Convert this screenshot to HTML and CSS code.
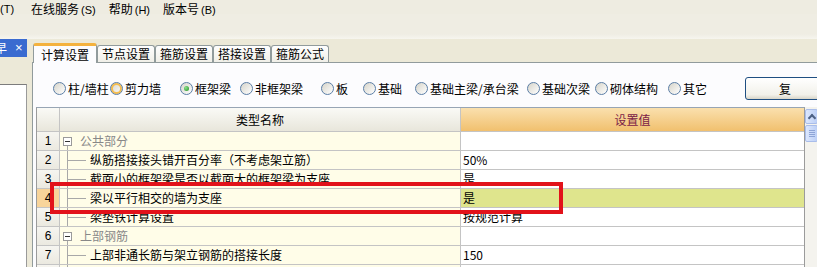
FILE: index.html
```html
<!DOCTYPE html>
<html lang="zh-CN">
<head>
<meta charset="UTF-8">
<title>计算设置</title>
<link rel="stylesheet" href="styles.css">
</head>
<body>

<div class="menubar">
  <span class="menu-item">(T)</span>
  <span class="menu-item first">在线服务<small>(S)</small></span>
  <span class="menu-item">帮助<small>(H)</small></span>
  <span class="menu-item">版本号<small>(B)</small></span>
</div>
<div class="toolbar"></div>

<div class="main">
  <div class="side">
    <div class="side-title"><span>早</span><span class="close">×</span></div>
    <div class="side-gap"></div>
    <div class="side-body"></div>
  </div>
  <div class="splitter"></div>

  <div class="tabpane">
    <div class="tabs">
      <div class="tab active">计算设置</div>
      <div class="tab">节点设置</div>
      <div class="tab">箍筋设置</div>
      <div class="tab">搭接设置</div>
      <div class="tab">箍筋公式</div>
    </div>

    <div class="panel">
      <div class="toprow">
        <div class="radios">
          <label class="radio"><span class="dot"></span>柱/墙柱</label>
          <label class="radio"><span class="dot hover"></span>剪力墙</label>
          <label class="radio"><span class="dot checked"></span>框架梁</label>
          <label class="radio"><span class="dot"></span>非框架梁</label>
          <label class="radio"><span class="dot"></span>板</label>
          <label class="radio"><span class="dot"></span>基础</label>
          <label class="radio"><span class="dot"></span>基础主梁/承台梁</label>
          <label class="radio"><span class="dot"></span>基础次梁</label>
          <label class="radio"><span class="dot"></span>砌体结构</label>
          <label class="radio"><span class="dot"></span>其它</label>
        </div>
        <button class="btn">复</button>
      </div>

      <div class="gridwrap">
        <div class="grid">
          <div class="row head">
            <div class="num"></div>
            <div class="name">类型名称</div>
            <div class="val">设置值</div>
          </div>
          <div class="row">
            <div class="num">1</div>
            <div class="name group"><span class="box"></span>公共部分</div>
            <div class="val"></div>
          </div>
          <div class="row">
            <div class="num">2</div>
            <div class="name child">纵筋搭接接头错开百分率（不考虑架立筋）</div>
            <div class="val">50%</div>
          </div>
          <div class="row">
            <div class="num">3</div>
            <div class="name child">截面小的框架梁是否以截面大的框架梁为支座</div>
            <div class="val">是</div>
          </div>
          <div class="row current">
            <div class="num">4</div>
            <div class="name child">梁以平行相交的墙为支座</div>
            <div class="val">是</div>
          </div>
          <div class="row">
            <div class="num">5</div>
            <div class="name child">梁垫铁计算设置</div>
            <div class="val">按规范计算</div>
          </div>
          <div class="row">
            <div class="num">6</div>
            <div class="name group"><span class="box"></span>上部钢筋</div>
            <div class="val"></div>
          </div>
          <div class="row">
            <div class="num">7</div>
            <div class="name child">上部非通长筋与架立钢筋的搭接长度</div>
            <div class="val">150</div>
          </div>
          <div class="row">
            <div class="num"></div>
            <div class="name child"></div>
            <div class="val"></div>
          </div>
        </div>
        <div class="scrollbar">
          <div class="sb-up"></div>
          <div class="sb-thumb"></div>
        </div>
      </div>
    </div>
  </div>
</div>

<div class="mark"></div>

</body>
</html>
```

FILE: styles.css
```css
html, body {
  margin: 0;
  padding: 0;
}

body {
  width: 817px;
  height: 267px;
  overflow: hidden;
  font-family: "Noto Sans CJK SC", "Liberation Sans", sans-serif;
  font-size: 12px;
  color: #000;
  background-color: #eeece1;
}

/* menu + toolbar */
.menubar {
  height: 13px;
  padding-top: 1px;
  line-height: 16px;
  display: flex;
  gap: 13px;
  white-space: nowrap;
}

.menu-item {
  height: 16px;
}

.menu-item small {
  font-family: "Liberation Sans", sans-serif;
  font-size: 11px;
  margin-left: 2px;
}

.menu-item:first-child {
  font-family: "Liberation Sans", sans-serif;
  font-size: 11px;
  margin-right: 4px;
}

.toolbar {
  height: 25px;
  background: linear-gradient(#efede3 80%, #f6f5ef);
}

.main {
  display: flex;
  height: 228px;
}

/* left docked panel */
.side {
  width: 27px;
  display: flex;
  flex-direction: column;
  overflow: hidden;
}

.side-title {
  height: 18px;
  background-color: #3a6bd0;
  color: #fff;
  line-height: 18px;
  display: flex;
  white-space: nowrap;
  margin-left: -5px;
}

.side-title .close {
  margin-left: 8px;
  font-family: "Liberation Sans", sans-serif;
  font-size: 13px;
}

.side-gap {
  height: 27px;
  background-color: #ece9d8;
}

.side-body {
  flex: 1;
  background-color: #fff;
  border-top: 1px solid #7c7c7c;
  border-right: 1px solid #9a9a9a;
}

.splitter {
  width: 5px;
  background-color: #ece9d8;
}

/* tabs */
.tabpane {
  flex: 1;
  display: flex;
  flex-direction: column;
  min-width: 0;
}

.tabs {
  height: 23px;
  display: flex;
  align-items: flex-end;
  padding-left: 1px;
  background-color: #ece9d8;
  border-bottom: 1px solid #919b9c;
}

.tab {
  height: 16px;
  line-height: 16px;
  padding: 0 4px;
  border: 1px solid #919b9c;
  border-bottom: 0;
  border-radius: 3px 3px 0 0;
  background: linear-gradient(#fefefe, #f0efe8);
  white-space: nowrap;
}

.tab.active {
  height: 17px;
  line-height: 17px;
  padding: 0 7px;
  margin-bottom: -1px;
  border-top: 3px solid #f4b23e;
  background: #fcfcfe;
}

/* panel */
.panel {
  flex: 1;
  background-color: #fcfcfe;
  border-left: 1px solid #919b9c;
  padding-left: 3px;
  overflow: hidden;
}

.toprow {
  display: flex;
  align-items: center;
  height: 23px;
  margin-top: 14px;
  padding-left: 17px;
}

.radios {
  display: grid;
  grid-template-columns: 57px 70px 60px 81px 42px 52px 112px 68px 73px 77px;
  align-items: center;
}

.radio {
  display: flex;
  align-items: center;
  gap: 2px;
  white-space: nowrap;
}

.dot {
  width: 11px;
  height: 11px;
  border: 1px solid #5b7ea6;
  border-radius: 50%;
  background: linear-gradient(135deg, #d6d4ca, #ffffff);
  display: inline-flex;
  align-items: center;
  justify-content: center;
}

.dot.hover {
  box-shadow: inset 0 0 0 2px #f5bd4f;
}

.dot.checked::after {
  content: "";
  width: 5px;
  height: 5px;
  border-radius: 50%;
  background: radial-gradient(circle at 35% 35%, #8ee08e, #1e8f1e);
}

.btn {
  width: 80px;
  height: 23px;
  flex-shrink: 0;
  padding: 0;
  font-family: inherit;
  font-size: 12px;
  border: 1px solid #1f4f82;
  border-radius: 3px;
  background: linear-gradient(#ffffff, #f2f1ea 80%, #d8d5c8);
}

/* grid */
.gridwrap {
  display: flex;
  margin-top: 7px;
}

.grid {
  width: 767px;
  flex-shrink: 0;
  border-top: 1px solid #97a5b4;
  border-left: 1px solid #9b9b9b;
  border-right: 1px solid #9b9b9b;
}

.row {
  display: flex;
  height: 18px;
  line-height: 18px;
  border-bottom: 1px solid #c4c4c4;
}

.num {
  width: 22px;
  text-align: center;
  border-right: 1px solid #c4c4c4;
  background: linear-gradient(#f6f5f0, #ebe9e0);
  font-family: "Liberation Sans", sans-serif;
}

.name {
  width: 400px;
  border-right: 1px solid #c4c4c4;
  background-color: #fffde8;
  white-space: nowrap;
  overflow: hidden;
}

.val {
  flex: 1;
  padding-left: 2px;
  background-color: #fff;
  white-space: nowrap;
}

.row.head {
  height: 23px;
  line-height: 23px;
}

.row.head .name {
  text-align: center;
  background: linear-gradient(#fafaf6, #e8e6db);
}

.row.head .num {
  background: linear-gradient(#fafaf6, #e8e6db);
}

.row.head .val {
  text-align: center;
  padding-left: 0;
  color: #7b1c47;
  background: linear-gradient(#fae0ae, #f1c06e);
}

.row.current .num {
  background: #f8d49a;
}

.row.current .val {
  background-color: #dfe58d;
}

.name.group {
  display: flex;
  align-items: center;
  padding-left: 3px;
  width: 397px;
  color: #888;
  background: linear-gradient(#a8a8a8, #a8a8a8) 7px 14px / 1px 4px no-repeat, #fffde8;
}

.box {
  width: 7px;
  height: 7px;
  margin-right: 8px;
  border: 1px solid #9a9a9a;
  background: linear-gradient(#333, #333) center / 5px 1px no-repeat, #fff;
}

.name.child {
  padding-left: 30px;
  width: 370px;
  background:
    linear-gradient(#a8a8a8, #a8a8a8) 7px 0 / 1px 100% no-repeat,
    linear-gradient(#a8a8a8, #a8a8a8) 8px 9px / 18px 1px no-repeat,
    #fffde8;
}

/* scrollbar */
.scrollbar {
  width: 13px;
  flex-shrink: 0;
  padding-top: 2px;
  background-color: #f4f3ee;
}

.sb-up,
.sb-thumb {
  box-sizing: border-box;
  border: 1px solid #a9bdea;
  border-radius: 2px;
  background: linear-gradient(90deg, #dce7fd, #bccff6);
}

.sb-up {
  height: 15px;
  position: relative;
}

.sb-up::after {
  content: "";
  position: absolute;
  left: 3px;
  top: 5px;
  width: 4px;
  height: 4px;
  border-left: 2px solid #4d6185;
  border-top: 2px solid #4d6185;
  transform: rotate(45deg);
}

.sb-thumb {
  height: 17px;
  margin-top: 1px;
  background:
    repeating-linear-gradient(#8ea4d6 0 1px, transparent 1px 2px) center / 6px 7px no-repeat,
    linear-gradient(90deg, #dce7fd, #bccff6);
}

/* red highlight drawn over the grid */
.mark {
  position: absolute;
  left: 50px;
  top: 182px;
  width: 513px;
  height: 32px;
  box-sizing: border-box;
  border: 4px solid #e2121a;
}
```
